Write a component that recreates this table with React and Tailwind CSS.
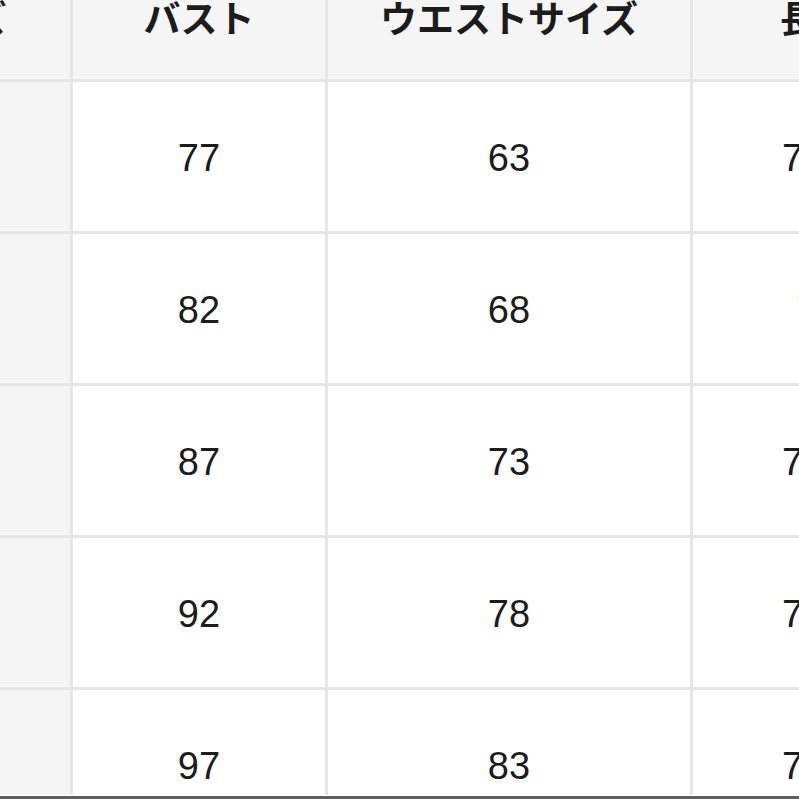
import React from "react";

const rows = [
  { size: "S", bust: "77", waist: "63", len: "75", lenPad: "pl-[89px]" },
  { size: "M", bust: "82", waist: "68", len: "76", lenPad: "pl-[104px]" },
  { size: "L", bust: "87", waist: "73", len: "77", lenPad: "pl-[89px]" },
  { size: "XL", bust: "92", waist: "78", len: "78", lenPad: "pl-[89px]" },
  { size: "XXL", bust: "97", waist: "83", len: "79", lenPad: "pl-[89px]" },
];

const font = { fontFamily: "'Liberation Sans','Noto Sans CJK JP',sans-serif" };

export default function App() {
  return (
    <div className="w-[799px] h-[799px] overflow-hidden bg-white flex flex-col" style={font}>
      <div className="flex-1 overflow-hidden">
        <div className="ml-[-167px] w-max grid grid-cols-[237px_252px_362px_240px] grid-rows-[79px_repeat(5,149px)] gap-[3px] bg-[#e6e6e6] text-[#1c1c1c]">
          <div className="bg-[#f5f5f5] flex justify-center items-start pt-[2px] text-[37px] leading-none font-bold">サイズ</div>
          <div className="bg-[#f5f5f5] flex justify-center items-start pt-[2px] text-[37px] leading-none font-bold">バスト</div>
          <div className="bg-[#f5f5f5] flex justify-center items-start pt-[2px] text-[37px] leading-none font-bold">ウエストサイズ</div>
          <div className="bg-[#f5f5f5] flex justify-start items-start pt-[2px] pl-[87px] text-[37px] leading-none font-bold whitespace-nowrap">長さ</div>
          {rows.map((r) => (
            <React.Fragment key={r.size}>
              <div className="bg-[#f5f5f5] flex justify-center items-center pt-[3px] text-[38px] leading-none">{r.size}</div>
              <div className="bg-white flex justify-center items-center pt-[3px] text-[38px] leading-none">{r.bust}</div>
              <div className="bg-white flex justify-center items-center pt-[3px] text-[38px] leading-none">{r.waist}</div>
              <div className={`bg-white flex justify-start items-center pt-[3px] text-[38px] leading-none ${r.lenPad}`}>{r.len}</div>
            </React.Fragment>
          ))}
        </div>
      </div>
      <div className="h-[1px] bg-white shrink-0" />
      <div className="h-[3px] bg-[#5f5f5f] shrink-0" />
    </div>
  );
}
